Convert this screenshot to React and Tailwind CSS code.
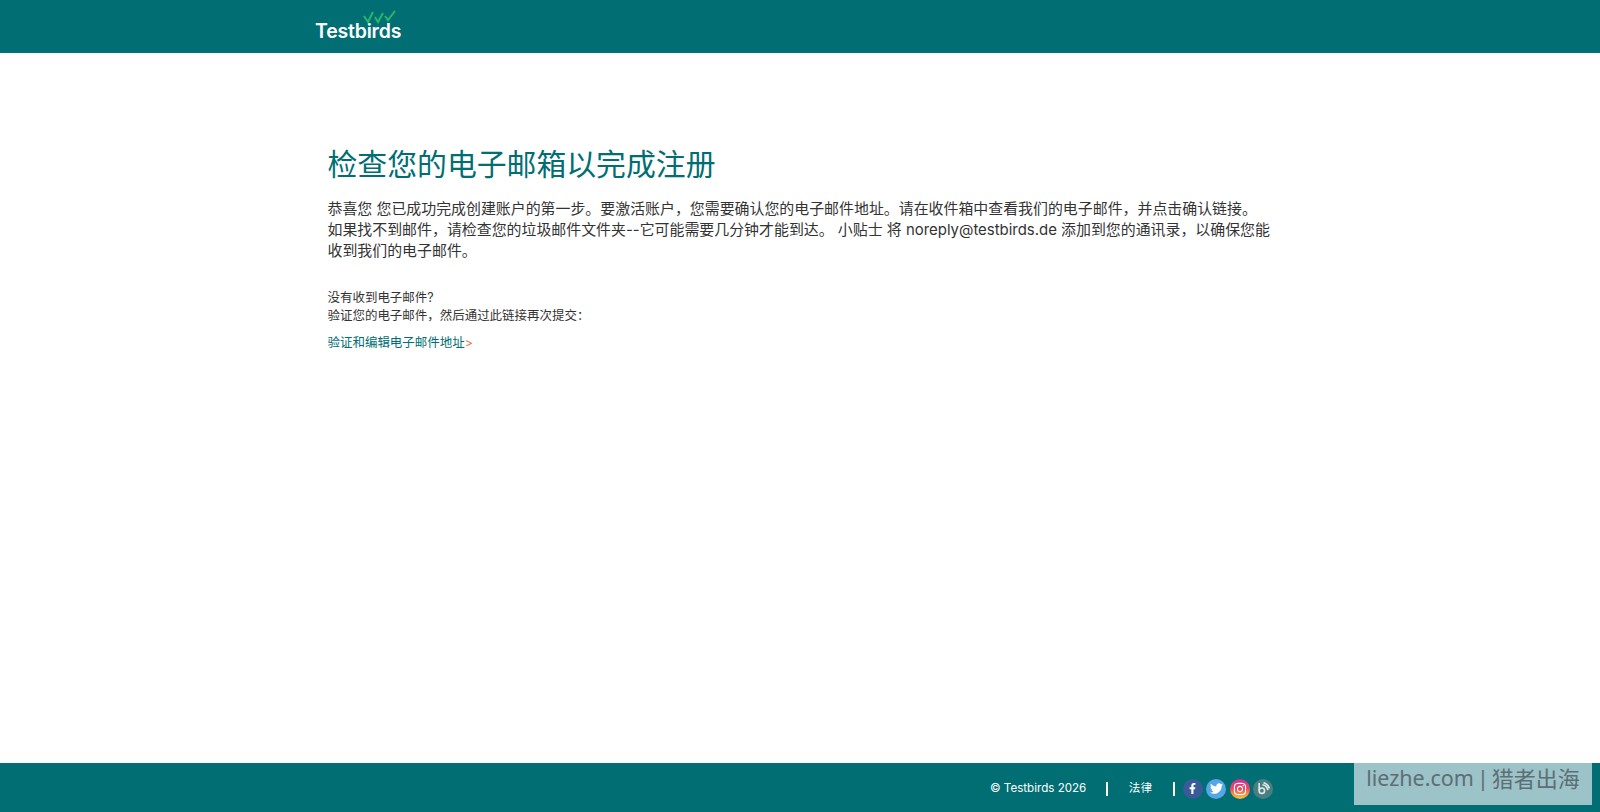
import React from 'react';
import { FaFacebookF, FaTwitter, FaInstagram } from 'react-icons/fa';

const cjk = "font-['Inter','Noto_Sans_CJK_SC',sans-serif]";

const Logo = () => (
  <div className="relative w-[86px] h-[53px]">
    <svg className="absolute left-[48px] top-[10px]" width="34" height="14" viewBox="0 0 34 14" fill="none" stroke="#25b86c" strokeWidth="2">
      <path d="M1 6l4 6 5-10" />
      <path d="M12 7l3 5 5-9" />
      <path d="M22 6l3 4 7-9" />
    </svg>
    <span className="absolute left-0 top-[19.5px] text-[19.5px] leading-[22px] font-semibold text-white font-['Inter',sans-serif] tracking-[-0.2px]">Testbirds</span>
  </div>
);

const BlogIcon = () => (
  <svg width="13" height="13" viewBox="0 0 12 12" fill="none" stroke="#dfe8e8" strokeWidth="1.5">
    <circle cx="4.5" cy="8" r="2.5" />
    <path d="M2 1v7" />
    <path d="M5 2.5a6 6 0 0 1 5 5" />
    <path d="M6 .6a8 8 0 0 1 5.4 5.4" />
  </svg>
);

const Social = ({ className, children }) => (
  <a className={`w-5 h-5 rounded-full flex items-center justify-center text-white ${className}`}>
    {children}
  </a>
);

export default function App() {
  return (
    <div className={`relative h-screen flex flex-col bg-white ${cjk}`}>
      <header className="h-[53px] bg-[#006e73] pl-[315px]">
        <Logo />
      </header>

      <main className="flex-1 pl-[327.5px] w-[1275px] pt-[91px] text-[#333]">
        <h1 className="text-[29.85px] leading-[40px] text-[#006e73]">检查您的电子邮箱以完成注册</h1>
        <p className="mt-[15px] text-[14.93px] leading-[21.2px]">
          恭喜您 您已成功完成创建账户的第一步。要激活账户，您需要确认您的电子邮件地址。请在收件箱中查看我们的电子邮件，并点击确认链接。<br />
          如果找不到邮件，请检查您的垃圾邮件文件夹--它可能需要几分钟才能到达。 小贴士 将 noreply@testbirds.de 添加到您的通讯录，以确保您能收到我们的电子邮件。
        </p>
        <p className="mt-[26.6px] text-[12.48px] leading-[18px]">
          没有收到电子邮件?<br />
          验证您的电子邮件，然后通过此链接再次提交：
        </p>
        <p className="mt-[9px] text-[12.48px] leading-[18px]">
          <a className="text-[#006e73]">验证和编辑电子邮件地址</a>
          <span className="text-[#e8734a]">&gt;</span>
        </p>
      </main>

      <footer className="h-[49px] bg-[#006e73] flex items-center pt-[2px] pl-[990px] text-white text-[11.6px]">
        <span>© Testbirds 2026</span>
        <span className="ml-[20px] w-[1.5px] h-[14px] bg-white" />
        <a className="ml-[21px]">法律</a>
        <span className="ml-[21px] w-[1.5px] h-[14px] bg-white" />
        <div className="ml-[8px] flex items-center gap-[3.5px]">
          <Social className="bg-[#3b5a9a]"><FaFacebookF size={11} /></Social>
          <Social className="bg-[#55a6e6]"><FaTwitter size={13} /></Social>
          <Social className="bg-gradient-to-t from-[#fdc82f] via-[#ee4a5a] to-[#c92b9c]"><FaInstagram size={14} /></Social>
          <Social className="bg-[#4a7f82]"><BlogIcon /></Social>
        </div>
      </footer>

      <div className="absolute left-[1354px] top-[763px] w-[238px] h-[42px] bg-[#9bc3c8] flex items-center justify-center pb-[12px] text-[#5e6e75] text-[21.5px] font-['Noto_Sans','Noto_Sans_CJK_SC',sans-serif]">
        liezhe.com<span className="mx-[3px]">|</span><span className="text-[22px]">猎者出海</span>
      </div>
    </div>
  );
}
